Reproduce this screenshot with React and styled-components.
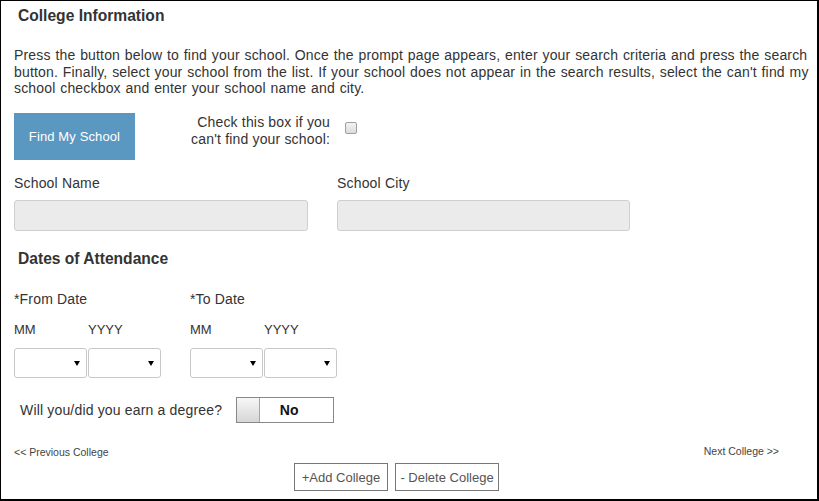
import React from "react";
import styled, { createGlobalStyle } from "styled-components";

const GlobalStyle = createGlobalStyle`
    body {
        margin: 0;
        background: #fff;
        font-family: "Liberation Sans", Arial, sans-serif;
    }
`;

const Panel = styled.div`
    width: 819px;
    height: 501px;
    box-sizing: border-box;
    border: 1px solid #000;
    border-right-width: 2px;
    border-bottom-width: 2px;
    padding: 0 6px 0 13px;
    color: #333;
    font-size: 14px;
    letter-spacing: 0.17px;
    overflow: hidden;
`;

const SectionTitle = styled.h2`
    margin: ${props => props.$top}px 0 0 4px;
    font-size: 15.6px;
    line-height: 18px;
    font-weight: bold;
    letter-spacing: 0;
    color: #333;
`;

const Intro = styled.p`
    margin: 22px 0 0;
    line-height: 16.5px;
    word-spacing: 0.7px;
`;

const FinderRow = styled.div`
    display: flex;
    align-items: flex-start;
    margin-top: 16.5px;
`;

const FindButton = styled.button`
    width: 121px;
    height: 47px;
    padding: 0;
    border: none;
    background: #5b98c1;
    color: #fff;
    font-family: inherit;
    font-size: 13px;
    letter-spacing: 0.12px;
`;

const CantFind = styled.label`
    width: 195px;
    margin-top: 1px;
    line-height: 16.5px;
    text-align: right;
`;

const Checkbox = styled.input`
    appearance: none;
    width: 12px;
    height: 12px;
    margin: 9px 0 0 15px;
    box-sizing: border-box;
    border: 1px solid #a0a0a0;
    border-radius: 2px;
    background: linear-gradient(#f2f2f2, #dcdcdc);
`;

const FieldsRow = styled.div`
    display: flex;
    gap: 29px;
`;

const Field = styled.div`
    display: flex;
    flex-direction: column;
    width: ${props => props.$width}px;
`;

const FieldLabel = styled.label`
    margin-top: 15px;
    line-height: 16px;
`;

const TextInput = styled.input`
    margin-top: 9px;
    height: 31px;
    box-sizing: border-box;
    border: 1px solid #cfcfcf;
    border-radius: 3px;
    background: #ebebeb;
`;

const DatesRow = styled.div`
    display: flex;
`;

const DateGroup = styled.div`
    width: ${props => props.$width}px;
`;

const DateLabel = styled.div`
    margin-top: 23px;
    line-height: 16px;
`;

const PartLabels = styled.div`
    display: flex;
    margin-top: 15px;
    font-size: 13px;
    line-height: 16px;
    letter-spacing: 0;
`;

const PartLabel = styled.span`
    width: 74px;
`;

const Selects = styled.div`
    display: flex;
    gap: 1px;
    margin-top: 10px;
`;

const SelectBox = styled.div`
    position: relative;
    width: 73px;
    height: 30px;
    box-sizing: border-box;
    border: 1px solid #c8c8c8;
    border-radius: 3px;
    background: #fff;

    &::after {
        content: "";
        position: absolute;
        right: 6px;
        top: 12px;
        border-left: 3px solid transparent;
        border-right: 3px solid transparent;
        border-top: 5px solid #000;
    }
`;

const DegreeRow = styled.div`
    display: flex;
    align-items: center;
    margin-top: 19px;
    padding-left: 6px;
`;

const Question = styled.span`
    margin-right: 14px;
`;

const Toggle = styled.div`
    display: flex;
    width: 98px;
    height: 26px;
    box-sizing: border-box;
    border: 1px solid #888;
    background: #fff;
`;

const Knob = styled.span`
    width: 22px;
    border-right: 1px solid #a5a5a5;
    background: linear-gradient(#f7f7f7, #d6d6d6);
`;

const ToggleText = styled.span`
    flex: 1;
    padding-right: 15px;
    text-align: center;
    font-size: 14px;
    font-weight: bold;
    line-height: 24px;
    letter-spacing: 0;
    color: #111;
`;

const NavRow = styled.div`
    display: flex;
    justify-content: space-between;
    margin-top: 23px;
    padding-right: 32px;
    font-size: 10.5px;
    line-height: 12px;
    letter-spacing: 0;
    color: #444;
`;

const NavLink = styled.a`
    color: inherit;
    text-decoration: none;
    margin-top: ${props => props.$offset || 0}px;
`;

const Actions = styled.div`
    display: flex;
    gap: 7px;
    margin: 5px 0 0 280px;
`;

const ActionButton = styled.button`
    width: ${props => props.$width}px;
    height: 28px;
    padding: 0;
    border: 1px solid #777;
    background: #fff;
    color: #555;
    font-family: inherit;
    font-size: 13px;
`;

const DatePicker = ({ label }) => (
    <DateGroup $width={176}>
        <DateLabel>{label}</DateLabel>
        <PartLabels>
            <PartLabel>MM</PartLabel>
            <PartLabel>YYYY</PartLabel>
        </PartLabels>
        <Selects>
            <SelectBox />
            <SelectBox />
        </Selects>
    </DateGroup>
);

const App = () => {
    return (
        <Panel>
            <GlobalStyle />
            <SectionTitle $top={6}>College Information</SectionTitle>
            <Intro>
                Press the button below to find your school. Once the prompt
                page appears, enter your search criteria and press the search
                button. Finally, select your school from the list. If your
                school does not appear in the search results, select the
                can't find my school checkbox and enter your school name and
                city.
            </Intro>

            <FinderRow>
                <FindButton>Find My School</FindButton>
                <CantFind htmlFor="cantfind">
                    Check this box if you
                    <br />
                    can't find your school:
                </CantFind>
                <Checkbox id="cantfind" type="checkbox" />
            </FinderRow>

            <FieldsRow>
                <Field $width={294}>
                    <FieldLabel>School Name</FieldLabel>
                    <TextInput />
                </Field>
                <Field $width={293}>
                    <FieldLabel>School City</FieldLabel>
                    <TextInput />
                </Field>
            </FieldsRow>

            <SectionTitle $top={19}>Dates of Attendance</SectionTitle>
            <DatesRow>
                <DatePicker label="*From Date" />
                <DatePicker label="*To Date" />
            </DatesRow>

            <DegreeRow>
                <Question>Will you/did you earn a degree?</Question>
                <Toggle>
                    <Knob />
                    <ToggleText>No</ToggleText>
                </Toggle>
            </DegreeRow>

            <NavRow>
                <NavLink href="#">{"<< Previous College"}</NavLink>
                <NavLink href="#" $offset={-1}>
                    {"Next College >>"}
                </NavLink>
            </NavRow>

            <Actions>
                <ActionButton $width={94}>+Add College</ActionButton>
                <ActionButton $width={104}>- Delete College</ActionButton>
            </Actions>
        </Panel>
    );
};

export default App;
